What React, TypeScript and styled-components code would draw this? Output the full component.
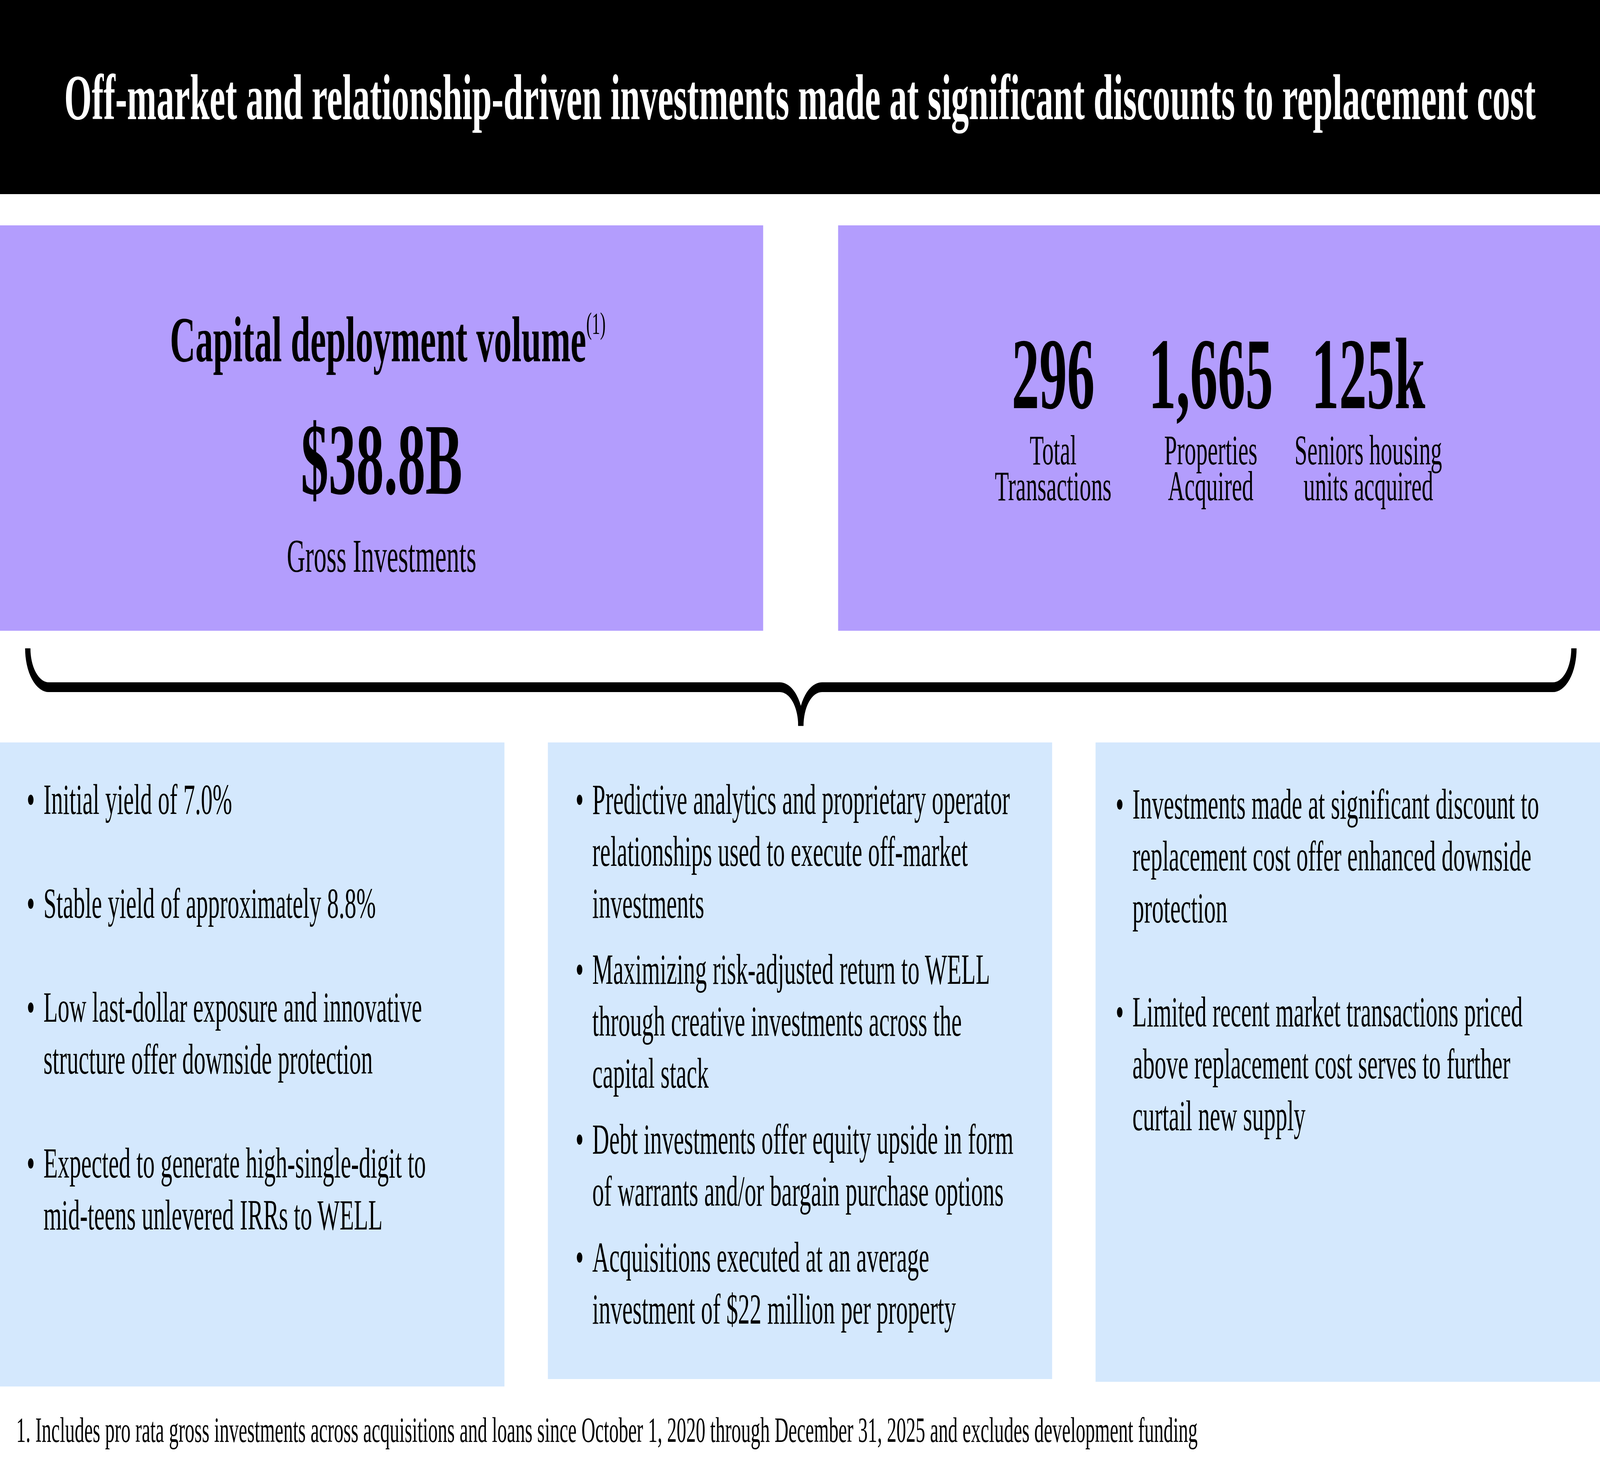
import React, { useEffect, useState } from "react";
import styled, { createGlobalStyle } from "styled-components";

// the slide is laid out at its native 7514x3792 and fitted to the window
const SLIDE_W = 7514
const SLIDE_H = 3792

const GlobalStyle = createGlobalStyle`
    html, body {
        margin: 0;
        padding: 0;
        background: #ffffff;
        overflow: hidden;
    }
    body {
        font-family: "Liberation Serif", "Times New Roman", serif;
        color: #000000;
    }
`

const Viewport = styled.div`
    width: 100vw;
    height: 100vh;
    overflow: hidden;
`

const Page = styled.div`
    width: ${SLIDE_W}px;
    height: ${SLIDE_H}px;
    display: flex;
    flex-direction: column;
    overflow: hidden;
    background: #ffffff;
    transform-origin: 0 0;
`

const Header = styled.header`
    flex: none;
    height: 497px;
    background: #000000;
    display: flex;
    align-items: center;
    justify-content: center;
`

const HeaderTitle = styled.h1`
    margin: 0;
    color: #ffffff;
    font-size: 166px;
    font-weight: 700;
    line-height: 1;
    white-space: nowrap;
`

const StatRow = styled.section`
    flex: none;
    display: grid;
    grid-template-columns: 3584px 1fr;
    column-gap: 352px;
    height: 1038px;
    margin-top: 80px;
`

const PurpleCard = styled.div<{ $pt: number; $pr?: number }>`
    background: #b39dfd;
    padding-top: ${p => p.$pt}px;
    padding-right: ${p => p.$pr || 0}px;
    box-sizing: border-box;
    display: flex;
    flex-direction: column;
    align-items: center;
`

const CardTitle = styled.div`
    font-size: 166px;
    font-weight: 700;
    line-height: 200px;
    padding-left: 58px;
    white-space: nowrap;
`

const Sup = styled.span`
    font-size: 78px;
    font-weight: 400;
    line-height: 1;
    vertical-align: 71px;
`

const BigValue = styled.div`
    font-size: 260px;
    font-weight: 700;
    line-height: 300px;
    margin-top: 57px;
`

const Caption = styled.div`
    font-size: 120px;
    line-height: 150px;
    margin-top: 23px;
`

const StatGrid = styled.div`
    display: grid;
    grid-template-columns: repeat(3, 740px);
`

const Stat = styled.div`
    display: flex;
    flex-direction: column;
    align-items: center;
    text-align: center;
`

const StatValue = styled.div`
    font-size: 260px;
    font-weight: 700;
    line-height: 300px;
    white-space: nowrap;
`

const StatLabel = styled.div`
    font-size: 108px;
    line-height: 92px;
    white-space: nowrap;
`

const BraceRow = styled.div`
    flex: none;
    height: 286px;
    & svg {
        display: block;
    }
`

const BulletRow = styled.section`
    flex: none;
    display: grid;
    grid-template-columns: repeat(3, 1fr);
    column-gap: 204px;
    align-items: start;
`

const BulletCard = styled.div<{ $h: number; $pt: number; $pl: number; $pr: number }>`
    background: #d4e8fd;
    height: ${p => p.$h}px;
    padding: ${p => p.$pt}px ${p => p.$pr}px 0 ${p => p.$pl}px;
    box-sizing: border-box;
`

const BulletList = styled.ul<{ $gap: number }>`
    list-style: none;
    margin: 0;
    padding: 0;
    display: flex;
    flex-direction: column;
    gap: ${p => p.$gap}px;
`

const Item = styled.li`
    display: flex;
    font-size: 110px;
    line-height: 133px;
`

const Marker = styled.span`
    flex: none;
    width: 79px;
`

const Footnote = styled.p`
    margin: 57px 0 0;
    padding-left: 76px;
    font-size: 90px;
    line-height: 110px;
    white-space: nowrap;
`

const stats = [
    { value: '296', label: ['Total', 'Transactions'] },
    { value: '1,665', label: ['Properties', 'Acquired'] },
    { value: '125k', label: ['Seniors housing', 'units acquired'] },
]

const columns = [
    {
        h: 1649, pt: 80, pl: 125, pr: 250, gap: 133,
        items: [
            'Initial yield of 7.0%',
            'Stable yield of approximately 8.8%',
            'Low last-dollar exposure and innovative structure offer downside protection',
            'Expected to generate high-single-digit to mid-teens unlevered IRRs to WELL',
        ],
    },
    {
        h: 1630, pt: 80, pl: 130, pr: 129, gap: 36,
        items: [
            'Predictive analytics and proprietary operator relationships used to execute off-market investments',
            'Maximizing risk-adjusted return to WELL through creative investments across the capital stack',
            'Debt investments offer equity upside in form of warrants and/or bargain purchase options',
            'Acquisitions executed at an average investment of $22 million per property',
        ],
    },
    {
        h: 1637, pt: 92, pl: 94, pr: 169, gap: 133,
        items: [
            'Investments made at significant discount to replacement cost offer enhanced downside protection',
            'Limited recent market transactions priced above replacement cost serves to further curtail new supply',
        ],
    },
]

function Brace() {
    return (
        <svg width={SLIDE_W} height="286" viewBox={`0 0 ${SLIDE_W} 286`} fill="none" stroke="#000" strokeWidth={25}>
            <path d="M130.5 45 A99 99 0 0 0 229.5 144.5 H3662 A99 99 0 0 1 3761 243.5"/>
            <path d="M3761 243.5 A99 99 0 0 1 3860 144.5 H7292.5 A99 99 0 0 0 7391.5 45"/>
        </svg>
    )
}

function fitScale() {
    return { x: window.innerWidth / SLIDE_W, y: window.innerHeight / SLIDE_H }
}

export default function App() {
    const [scale, setScale] = useState(fitScale)

    useEffect(() => {
        const onResize = () => setScale(fitScale())
        window.addEventListener('resize', onResize)
        return () => window.removeEventListener('resize', onResize)
    }, [])

    return (
        <Viewport>
            <GlobalStyle/>
            <Page style={{ transform: `scale(${scale.x}, ${scale.y})` }}>
                <Header>
                    <HeaderTitle>Off-market and relationship-driven investments made at significant discounts to replacement cost</HeaderTitle>
                </Header>

                <StatRow>
                    <PurpleCard $pt={192}>
                        <CardTitle>Capital deployment volume<Sup>(1)</Sup></CardTitle>
                        <BigValue>$38.8B</BigValue>
                        <Caption>Gross Investments</Caption>
                    </PurpleCard>
                    <PurpleCard $pt={230} $pr={78}>
                        <StatGrid>
                            {stats.map(s => (
                                <Stat key={s.value}>
                                    <StatValue>{s.value}</StatValue>
                                    <StatLabel>{s.label[0]}<br/>{s.label[1]}</StatLabel>
                                </Stat>
                            ))}
                        </StatGrid>
                    </PurpleCard>
                </StatRow>

                <BraceRow>
                    <Brace/>
                </BraceRow>

                <BulletRow>
                    {columns.map((c, i) => (
                        <BulletCard key={i} $h={c.h} $pt={c.pt} $pl={c.pl} $pr={c.pr}>
                            <BulletList $gap={c.gap}>
                                {c.items.map(t => (
                                    <Item key={t}>
                                        <Marker>•</Marker>
                                        <span>{t}</span>
                                    </Item>
                                ))}
                            </BulletList>
                        </BulletCard>
                    ))}
                </BulletRow>

                <Footnote>1. Includes pro rata gross investments across acquisitions and loans since October 1, 2020 through December 31, 2025 and excludes development funding</Footnote>
            </Page>
        </Viewport>
    )
}
